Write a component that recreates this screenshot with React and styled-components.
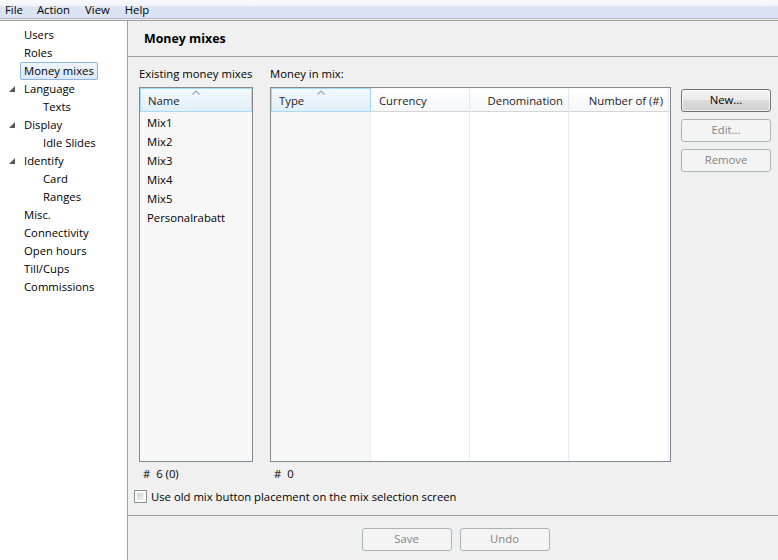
import React from 'react'
import styled, { createGlobalStyle } from 'styled-components'

const GlobalStyle = createGlobalStyle`
  html, body {
    margin: 0;
    padding: 0;
    width: 778px;
    height: 560px;
    overflow: hidden;
    background: #f0f0f0;
    font-family: "Segoe UI", "Open Sans", sans-serif;
    font-size: 11.3px;
    color: #000;
  }
  * { box-sizing: border-box; }
`

const Window = styled.div`
  width: 778px;
  height: 560px;
  display: flex;
  flex-direction: column;
`

const MenuBar = styled.div`
  height: 21px;
  flex-shrink: 0;
  display: flex;
  align-items: flex-start;
  background: linear-gradient(#f7f9fd 0, #f2f5fb 30%, #dde5f3 38%, #d9e2f2 100%);
  background-size: 100% 18px;
  background-repeat: no-repeat;
  border-bottom: 1px solid #a0a0a0;
  position: relative;
  &::after {
    content: '';
    position: absolute;
    left: 0;
    right: 0;
    top: 18px;
    height: 1px;
    background: #b4b9c6;
  }
`

const MenuItem = styled.span`
  padding: 0 7px 0 ${p => p.$left}px;
  height: 19px;
  line-height: 19px;
`

const Body = styled.div`
  flex: 1;
  display: flex;
  min-height: 0;
`

const Tree = styled.div`
  width: 128px;
  flex-shrink: 0;
  background: #fff;
  border-right: 1px solid #a0a0a0;
  padding-top: 5px;
`

const TreeRow = styled.div`
  height: 18px;
  display: flex;
  align-items: center;
  padding-left: ${p => 20 + p.$level * 19}px;
  position: relative;
`

const Expander = styled.svg`
  position: absolute;
  left: 9px;
  top: 6px;
`

const TreeLabel = styled.span`
  height: 18px;
  line-height: 16px;
  padding: 0 3px;
  border: 1px solid ${p => (p.$selected ? '#8fb4e0' : 'transparent')};
  border-radius: 2px;
  background: ${p => (p.$selected ? 'linear-gradient(#eef5fd, #d9e8fb)' : 'transparent')};
  white-space: nowrap;
`

const Main = styled.div`
  flex: 1;
  display: flex;
  flex-direction: column;
  min-width: 0;
`

const Header = styled.div`
  height: 36px;
  padding-left: 16px;
  display: flex;
  align-items: center;
  font-weight: bold;
  font-size: 12.4px;
  border-bottom: 1px solid #a0a0a0;
  flex-shrink: 0;
`

const Content = styled.div`
  flex: 1;
  padding: 9px 8px 0 11px;
  display: flex;
  flex-direction: column;
  border-bottom: 1px solid #a0a0a0;
`

const Columns = styled.div`
  display: flex;
  gap: 17px;
`

const Column = styled.div`
  display: flex;
  flex-direction: column;
  width: ${p => p.$width}px;
  flex-shrink: 0;
`

const Caption = styled.div`
  height: 21px;
  line-height: 16px;
  white-space: nowrap;
`

const ListBox = styled.div`
  height: 375px;
  border: 1px solid #828790;
  background: #fff;
  display: flex;
  flex-direction: column;
  position: relative;
  overflow: hidden;
`

const HeaderRow = styled.div`
  display: flex;
  height: 24px;
  flex-shrink: 0;
`

const HeadCell = styled.div`
  width: ${p => p.$width}px;
  flex-shrink: 0;
  height: 24px;
  padding: 1px ${p => (p.$right ? 5 : 7)}px 0;
  display: flex;
  align-items: center;
  justify-content: ${p => (p.$right ? 'flex-end' : 'flex-start')};
  position: relative;
  color: #1c1c1c;
  white-space: nowrap;
  background: ${p => (p.$sorted ? 'linear-gradient(#f3f9fd, #e1eff9)' : 'linear-gradient(#ffffff, #f6f7f9)')};
  border: 1px solid ${p => (p.$sorted ? '#a8d8f3' : 'transparent')};
  border-right: 1px solid ${p => (p.$sorted ? '#a8d8f3' : '#e3e6ea')};
  border-bottom: 1px solid ${p => (p.$sorted ? '#a8d8f3' : '#d5d5d5')};
`

const SortArrow = styled.svg`
  position: absolute;
  top: 1px;
  left: 50%;
  margin-left: -4px;
`

const BodyCols = styled.div`
  flex: 1;
  display: flex;
`

const BodyCol = styled.div`
  width: ${p => p.$width}px;
  flex-shrink: 0;
  background: ${p => (p.$sorted ? '#f7f7f7' : '#fff')};
  border-right: 1px solid ${p => (p.$last ? 'transparent' : '#e6edf8')};
  padding-top: 1px;
`

const Item = styled.div`
  height: 19px;
  line-height: 19px;
  padding-left: 7px;
  white-space: nowrap;
`

const Buttons = styled.div`
  display: flex;
  flex-direction: column;
  gap: 7px;
  padding-top: 23px;
  margin-left: -7px;
`

const Button = styled.button`
  width: 90px;
  height: 23px;
  font: inherit;
  padding: 0 0 2px;
  border-radius: 3px;
  border: 1px solid ${p => (p.disabled ? '#adb2b5' : '#707070')};
  color: ${p => (p.disabled ? '#838383' : '#000')};
  background: ${p =>
    p.disabled
      ? '#f4f4f4'
      : 'linear-gradient(#f2f2f2 0, #ebebeb 50%, #dddddd 50%, #cfcfcf 100%)'};
  box-shadow: inset 0 0 0 1px ${p => (p.disabled ? 'transparent' : 'rgba(255,255,255,0.7)')};
`

const Counts = styled.div`
  display: flex;
  height: 22px;
  align-items: center;
`

const Count = styled.span`
  width: ${p => p.$width}px;
  padding-left: 4px;
  white-space: pre;
`

const CheckRow = styled.label`
  display: flex;
  align-items: center;
  gap: 4px;
  margin-left: -5px;
  height: 24px;
`

const Box = styled.span`
  width: 13px;
  height: 13px;
  border: 1px solid #8e8f8f;
  background: #fff;
  padding: 2px;
  display: inline-block;
  &::before {
    content: '';
    display: block;
    width: 100%;
    height: 100%;
    background: linear-gradient(135deg, #cbcfd5, #f6f6f6);
  }
`

const Footer = styled.div`
  height: 44px;
  display: flex;
  justify-content: center;
  gap: 8px;
  padding-top: 12px;
  padding-left: 5px;
  flex-shrink: 0;
`

const menus = [
  { label: 'File', left: 5 },
  { label: 'Action', left: 7 },
  { label: 'View', left: 8 },
  { label: 'Help', left: 8 },
]

const treeItems = [
  { label: 'Users', level: 0 },
  { label: 'Roles', level: 0 },
  { label: 'Money mixes', level: 0, selected: true },
  { label: 'Language', level: 0, expanded: true },
  { label: 'Texts', level: 1 },
  { label: 'Display', level: 0, expanded: true },
  { label: 'Idle Slides', level: 1 },
  { label: 'Identify', level: 0, expanded: true },
  { label: 'Card', level: 1 },
  { label: 'Ranges', level: 1 },
  { label: 'Misc.', level: 0 },
  { label: 'Connectivity', level: 0 },
  { label: 'Open hours', level: 0 },
  { label: 'Till/Cups', level: 0 },
  { label: 'Commissions', level: 0 },
]

const mixes = ['Mix1', 'Mix2', 'Mix3', 'Mix4', 'Mix5', 'Personalrabatt']

const mixColumns = [
  { title: 'Type', width: 100, sorted: true },
  { title: 'Currency', width: 99 },
  { title: 'Denomination', width: 99, right: true },
  { title: 'Number of (#)', width: 100, right: true },
]

const Arrow = () => (
  <SortArrow width="8" height="5" viewBox="0 0 8 5">
    <path d="M0.5 4.5 L4 1 L7.5 4.5" fill="none" stroke="#97a8bd" strokeWidth="1.2" />
  </SortArrow>
)

export default function App() {
  return (
    <Window>
      <GlobalStyle />
      <MenuBar>
        {menus.map(m => (
          <MenuItem key={m.label} $left={m.left}>{m.label}</MenuItem>
        ))}
      </MenuBar>
      <Body>
        <Tree>
          {treeItems.map(item => (
            <TreeRow key={item.label} $level={item.level}>
              {item.expanded && (
                <Expander width="6" height="6" viewBox="0 0 6 6">
                  <polygon points="6,0 6,6 0,6" fill="#595959" />
                </Expander>
              )}
              <TreeLabel $selected={item.selected}>{item.label}</TreeLabel>
            </TreeRow>
          ))}
        </Tree>
        <Main>
          <Header>Money mixes</Header>
          <Content>
            <Columns>
              <Column $width={114}>
                <Caption>Existing money mixes</Caption>
                <ListBox>
                  <HeaderRow>
                    <HeadCell $width={112} $sorted>
                      <Arrow />
                      Name
                    </HeadCell>
                  </HeaderRow>
                  <BodyCols>
                    <BodyCol $width={112} $sorted $last>
                      {mixes.map(m => (
                        <Item key={m}>{m}</Item>
                      ))}
                    </BodyCol>
                  </BodyCols>
                </ListBox>
              </Column>
              <Column $width={401}>
                <Caption>Money in mix:</Caption>
                <ListBox>
                  <HeaderRow>
                    {mixColumns.map(c => (
                      <HeadCell key={c.title} $width={c.width} $sorted={c.sorted} $right={c.right}>
                        {c.sorted && <Arrow />}
                        {c.title}
                      </HeadCell>
                    ))}
                  </HeaderRow>
                  <BodyCols>
                    {mixColumns.map(c => (
                      <BodyCol key={c.title} $width={c.width} $sorted={c.sorted} />
                    ))}
                  </BodyCols>
                </ListBox>
              </Column>
              <Buttons>
                <Button>New...</Button>
                <Button disabled>Edit...</Button>
                <Button disabled>Remove</Button>
              </Buttons>
            </Columns>
            <Counts>
              <Count $width={131}>#  6 (0)</Count>
              <Count $width={100}>#  0</Count>
            </Counts>
            <CheckRow>
              <Box />
              Use old mix button placement on the mix selection screen
            </CheckRow>
          </Content>
          <Footer>
            <Button disabled>Save</Button>
            <Button disabled>Undo</Button>
          </Footer>
        </Main>
      </Body>
    </Window>
  )
}
